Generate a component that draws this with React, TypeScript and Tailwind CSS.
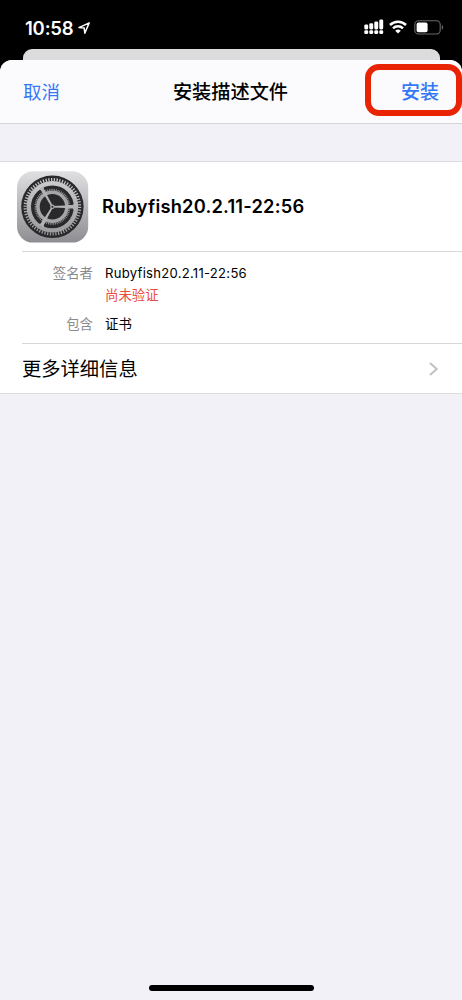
import React from 'react';

const PROFILE_NAME = 'Rubyfish20.2.11-22:56';

function LocationArrow() {
  return (
    <svg width="12" height="12" viewBox="0 0 12 12" fill="none" className="ml-[5px]">
      <path d="M11.2 0.9 L1 5.6 L6.2 6 L6.8 11.2 Z" stroke="white" strokeWidth="1.5" strokeLinejoin="round" />
    </svg>
  );
}

function SignalIcon() {
  const bars = [5, 6.2, 8, 10];
  return (
    <svg width="20" height="16" viewBox="0 0 20 16" fill="white">
      {bars.map((h, i) => (
        <g key={h}>
          <rect x={0.3 + i * 5} y={10.4 - h} width="3.9" height={h} rx="1.3" />
          <rect x={0.3 + i * 5} y="11.2" width="3.9" height="3.9" rx="1.4" />
        </g>
      ))}
    </svg>
  );
}

function WifiIcon() {
  return (
    <svg width="18" height="14" viewBox="0 0 18 14" fill="none" stroke="white" strokeWidth="2.5">
      <path d="M1 5 A11.6 11.6 0 0 1 17 5" />
      <path d="M4 8.3 A7.4 7.4 0 0 1 14 8.3" />
      <path d="M9 13.6 L6.2 10.8 A4.2 4.2 0 0 1 11.8 10.8 Z" fill="white" stroke="none" />
    </svg>
  );
}

function BatteryIcon() {
  return (
    <svg width="30" height="15" viewBox="0 0 30 15" fill="none">
      <rect x="0.8" y="0.8" width="25.4" height="13.2" rx="3.8" stroke="#6b6b6b" strokeWidth="1.1" />
      <rect x="2.6" y="2.6" width="11" height="9.6" rx="1.8" fill="white" />
      <path d="M27.8 5 C29.6 5.7 29.6 9 27.8 9.8 Z" fill="#6b6b6b" />
    </svg>
  );
}

function SettingsIcon() {
  const spokes = [0, 120, 240];
  return (
    <svg width="72" height="72" viewBox="0 0 72 72" className="shrink-0">
      <defs>
        <linearGradient id="plate" x1="0" y1="0" x2="0" y2="1">
          <stop offset="0" stopColor="#e0e0e3" />
          <stop offset="1" stopColor="#8e8e92" />
        </linearGradient>
        <linearGradient id="gear" gradientUnits="userSpaceOnUse" x1="0" y1="-30" x2="0" y2="30">
          <stop offset="0" stopColor="#cfcfd2" />
          <stop offset="1" stopColor="#98989b" />
        </linearGradient>
      </defs>
      <rect x="0" y="0.2" width="71.2" height="71.4" rx="16" fill="url(#plate)" />
      <g transform="translate(35.4 35.8)">
        <circle r="31.2" fill="#29292b" />
        {/* outer wheel */}
        <circle r="27.2" fill="none" stroke="url(#gear)" strokeWidth="3.2" pathLength="124" strokeDasharray="0.9 1.1" />
        <circle r="23.6" fill="none" stroke="url(#gear)" strokeWidth="4.4" />
        {/* inner wheel */}
        <circle r="17.1" fill="none" stroke="#98989b" strokeWidth="1.8" pathLength="120" strokeDasharray="1 1" />
        <circle r="14.5" fill="none" stroke="#a6a6a9" strokeWidth="3.6" />
        {spokes.map((angle) => (
          <path
            key={angle}
            transform={`rotate(${angle})`}
            d="M0 -0.8 L12.5 -1.2 L16 -1.7 L20 -1.7 Q21.4 -2.2 22 -4 V4 Q21.4 2.2 20 1.7 L16 1.7 L12.5 1.2 L0 0.8 Z"
            fill="#b2b2b5"
          />
        ))}
        <circle r="2.2" fill="#b2b2b5" />
        <circle r="1.1" fill="#29292b" />
      </g>
    </svg>
  );
}

function StatusBar() {
  return (
    <div className="flex h-[49px] items-start justify-between pl-[25px] pr-[18px] text-white">
      <div className="flex items-center pt-[14px]">
        <span className="text-[18.5px] font-semibold leading-7 tracking-[-0.2px]">10:58</span>
        <LocationArrow />
      </div>
      <div className="flex items-center pt-[19px]">
        <SignalIcon />
        <div className="ml-[5px]"><WifiIcon /></div>
        <div className="ml-[7px]"><BatteryIcon /></div>
      </div>
    </div>
  );
}

function Header() {
  return (
    <header className="relative flex h-16 items-center justify-between rounded-t-[12px] border-b border-[#d5d5d9] bg-[#fbfbfd] px-[23px] text-[19px] leading-7">
      <button className="text-[18.5px] text-[#3478f6]">取消</button>
      <h1 className="text-[19.2px] font-medium text-black">安装描述文件</h1>
      <button className="pt-0.5 text-[19px] font-medium text-[#3478f6]">安装</button>
      <div className="pointer-events-none absolute left-[365px] top-1 h-[52px] w-[97px] rounded-[14px] border-[6px] border-[#e82404]" />
    </header>
  );
}

export default function App() {
  return (
    <div className="flex h-[1000px] w-[462px] flex-col overflow-hidden bg-black font-['Inter','Noto_Sans_CJK_SC',sans-serif]">
      <StatusBar />
      <div className="mx-[22.5px] h-[11px] shrink-0 rounded-t-[9px] bg-[#dcdcdc]" />

      <div className="flex flex-1 flex-col rounded-t-[12px] bg-[#f2f1f7]">
        <Header />

        <section className="mt-[37px] border-y border-[#dcdcdf] bg-white text-black">
          <div className="flex h-[89px] items-center pl-[17px]">
            <SettingsIcon />
            <h2 className="mb-0.5 ml-[13px] text-[18.3px] font-semibold leading-7 tracking-[0.2px]">{PROFILE_NAME}</h2>
          </div>

          {/* Signer details */}
          <div className="ml-[22px] h-[93px] border-y border-[#d8d8db] pt-[11px] text-[13.4px]">
            <div className="flex leading-[21px]">
              <div className="w-[71px] text-right text-[#8a8a8e]">签名者</div>
              <div className="ml-3">
                <div className="text-[13.1px] tracking-[0.26px]">{PROFILE_NAME}</div>
                <div className="pt-px text-[#eb4d3d]">尚未验证</div>
              </div>
            </div>
            <div className="mt-[7px] flex leading-[22px]">
              <div className="w-[71px] text-right text-[#8a8a8e]">包含</div>
              <div className="ml-3">证书</div>
            </div>
          </div>

          {/* More details */}
          <button className="flex h-[49px] w-full items-center justify-between pl-[22px] pr-[23px] text-[19.3px]">
            <span className="pt-0.5">更多详细信息</span>
            <svg width="11" height="16" viewBox="0 0 11 16" fill="none">
              <path d="M2 2 L8.7 8 L2 14" stroke="#c3c3c6" strokeWidth="2.1" />
            </svg>
          </button>
        </section>

        <div className="mx-auto mb-[9px] mt-auto h-[6px] w-[165px] rounded-full bg-black" />
      </div>
    </div>
  );
}
